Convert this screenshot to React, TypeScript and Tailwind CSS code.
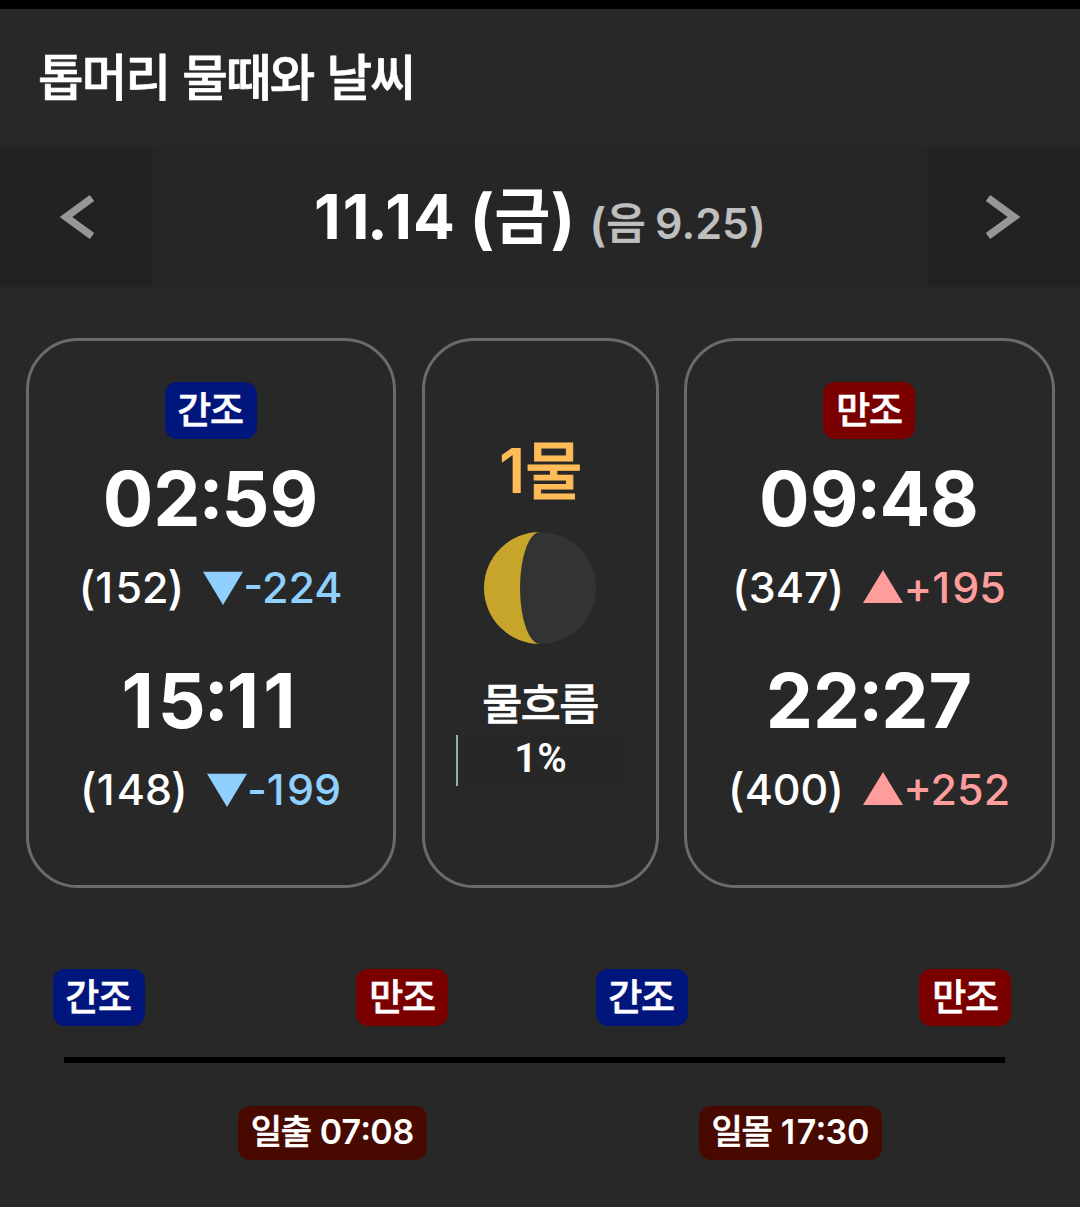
import { ReactNode } from 'react'
import clsx from 'clsx'

type Tide = { time: string; level: number; diff: number }

const lowTides: Tide[] = [
  { time: '02:59', level: 152, diff: -224 },
  { time: '15:11', level: 148, diff: -199 },
]

const highTides: Tide[] = [
  { time: '09:48', level: 347, diff: 195 },
  { time: '22:27', level: 400, diff: 252 },
]

// Inter sets "1" tight and ":" loose and low, so even them out
function Digits({ children }: { children: string }) {
  return (
    <span>
      {children.split(/([1:])/).map((part, i) => {
        if (part === '1') return <span key={i} className="tracking-[0.053em]">1</span>
        if (part === ':') return <span key={i} className="-mx-[0.027em] inline-block -translate-y-[0.107em]">:</span>
        return part
      })}
    </span>
  )
}

// parentheses hang a little below the digits
function Paren({ className, children }: { className: string; children: string }) {
  return <span className={clsx('inline-block text-[1.06em] leading-none', className)}>{children}</span>
}

// Hangul in a weight between medium and bold
function Ko({ className, children }: { className?: string; children: ReactNode }) {
  return (
    <span className={clsx('font-medium tracking-[-0.036em] [-webkit-text-stroke:0.015em]', className)}>{children}</span>
  )
}

function TideBadge({ high, className }: { high?: boolean; className?: string }) {
  return (
    <span
      className={clsx(
        'flex h-[57px] w-[92px] shrink-0 justify-center rounded-xl text-[37px] leading-[57px]',
        high ? 'bg-[#7a0000]' : 'bg-[#00167c] pr-[2px]',
        className,
      )}
    >
      <Ko>{high ? '만조' : '간조'}</Ko>
    </span>
  )
}

function SunBadge({ label, time, className }: { label: string; time: string; className: string }) {
  return (
    <span
      className={clsx(
        'flex h-[54px] shrink-0 justify-center rounded-xl bg-[#480a00] text-[34px] leading-[52px] font-semibold',
        className,
      )}
    >
      <Ko className="mr-[9px]">{label}</Ko>
      <Digits>{time}</Digits>
    </span>
  )
}

function TideRow({ tide }: { tide: Tide }) {
  const up = tide.diff > 0
  return (
    <div className="flex h-[202px] flex-col items-center">
      <p className="text-[75px] leading-[90px] font-bold">
        <Digits>{tide.time}</Digits>
      </p>
      <p className="mt-[15px] flex items-center text-[43px] leading-[56px] font-medium">
        <Paren className="translate-y-[1px]">(</Paren>
        <Digits>{`${tide.level}`}</Digits>
        <Paren className="-ml-px translate-y-[1px]">)</Paren>
        <span className={clsx('ml-[19px] flex items-center', up ? 'text-[#ff9d9d]' : 'text-[#8fd0ff]')}>
          <svg viewBox="0 0 40 34" className="h-[34px] w-[40px] overflow-visible" fill="currentColor">
            {up ? <path d="M20 0L40 33H0z" /> : <path d="M0 1.7h40L20 35z" />}
          </svg>
          <Digits>{up ? `+${tide.diff}` : `${tide.diff}`}</Digits>
        </span>
      </p>
    </div>
  )
}

function TideCard({ high, tides, className }: { high?: boolean; tides: Tide[]; className: string }) {
  return (
    <section
      className={clsx('flex h-[550px] flex-col items-center rounded-[52px] border-3 border-[#6b6b6b] pt-[41px]', className)}
    >
      <TideBadge high={high} className={high ? 'mr-px' : ''} />
      <div className="mt-[15px] mr-px">
        {tides.map((tide) => (
          <TideRow key={tide.time} tide={tide} />
        ))}
      </div>
    </section>
  )
}

function Moon() {
  return (
    <svg viewBox="0 0 112 112" className="mt-[21px] mr-px size-[112px]">
      <circle cx="56" cy="56" r="56" fill="#333333" />
      <path d="M56 0A56 56 0 0 0 56 112A20 56 0 0 1 56 0z" fill="#c7a52b" />
    </svg>
  )
}

export default function App() {
  return (
    <main className="h-[1207px] w-[1080px] overflow-hidden border-t-9 border-black bg-[#282828] font-['Inter','Noto_Sans_CJK_KR',sans-serif] text-white">
      <header className="flex h-[138px] items-center pl-[38px]">
        <h1 className="text-[49.5px] leading-[138px] [word-spacing:1.5px]">
          <Ko>톱머리 물때와 날씨</Ko>
        </h1>
      </header>

      <nav className="flex h-[140px] bg-[#262626]">
        <button className="flex w-[153px] items-center justify-center bg-[#222222]">
          <svg viewBox="0 0 36 44" className="ml-px h-[44px] w-[36px]" fill="none" stroke="#979797" strokeWidth="7.5">
            <path d="M33 3L7 22L33 41" />
          </svg>
        </button>
        <div className="flex flex-1 items-baseline justify-center leading-[139px]">
          <span className="text-[62px] font-bold">
            <span className="tracking-[2px]">1</span>
            <span className="tracking-[-2.5px]">1.</span>
            <span className="tracking-[1px]">1</span>4 <Paren className="translate-y-[3px]">(</Paren>
            <span className="text-[61px]">금</span>
            <Paren className="translate-y-[3px]">)</Paren>
          </span>
          <span className="ml-[14px] text-[43px] font-semibold text-[#bfbfbf]">
            <Paren className="translate-y-[2px]">(</Paren>
            <Ko>음</Ko> 9.25
            <Paren className="translate-y-[2px]">)</Paren>
          </span>
        </div>
        <button className="flex w-[153px] items-center justify-center bg-[#222222]">
          <svg viewBox="0 0 36 44" className="mr-[2px] h-[44px] w-[36px]" fill="none" stroke="#979797" strokeWidth="7.5">
            <path d="M3 3L29 22L3 41" />
          </svg>
        </button>
      </nav>

      <div className="mt-[51px] flex pl-[26px]">
        <TideCard tides={lowTides} className="w-[370px]" />

        <section className="ml-[26px] flex h-[550px] w-[237px] flex-col items-center rounded-[52px] border-3 border-[#6b6b6b] pt-[90px]">
          <p className="mr-[2px] text-[62px] leading-[80px] font-semibold text-[#ffbb57]">
            1<Ko className="align-[-1px] leading-none">물</Ko>
          </p>
          <Moon />
          <p className="mt-[30px] pr-px text-[43.5px] leading-[60px]">
            <Ko>물흐름</Ko>
          </p>
          <div className="mt-px mr-px flex h-[51px] w-[168px] justify-center border-l-2 border-[#8fb59b] bg-[#272727]">
            <span className="mr-px font-[Roboto,sans-serif] text-[40px] leading-[47px] font-semibold">1%</span>
          </div>
        </section>

        <TideCard high tides={highTides} className="ml-[25px] w-[371px]" />
      </div>

      <section className="mt-[81px]">
        <div className="flex pl-[53px]">
          <TideBadge />
          <TideBadge high className="ml-[211px]" />
          <TideBadge className="ml-[148px]" />
          <TideBadge high className="ml-[231px]" />
        </div>
        <div className="mt-[31px] ml-[64px] h-[6px] w-[941px] bg-black" />
        <div className="mt-[43px] flex pl-[238px]">
          <SunBadge label="일출" time="07:08" className="w-[189px]" />
          <SunBadge label="일몰" time="17:30" className="ml-[272px] w-[183px]" />
        </div>
      </section>
    </main>
  )
}
